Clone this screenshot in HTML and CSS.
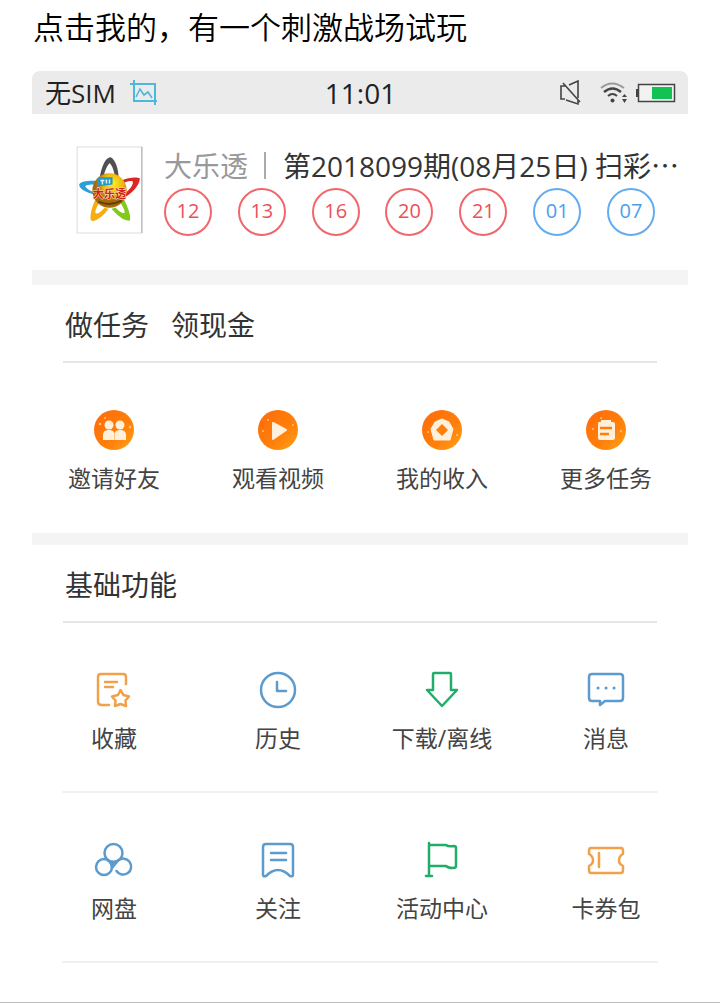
FILE: index.html
```html
<!DOCTYPE html>
<html lang="zh-CN">
<head>
    <meta charset="UTF-8">
    <meta name="viewport" content="width=device-width, initial-scale=1">
    <title>我的</title>
    <link rel="stylesheet" href="styles.css">
</head>
<body>
    <h1>点击我的，有一个刺激战场试玩</h1>

    <div class="phone">
        <!-- Status bar -->
        <div class="status">
            <div class="status-left">
                <span>无SIM</span>
                <svg width="28" height="26" viewBox="0 0 28 26" fill="none" stroke="#4db8dc" stroke-width="2">
                    <path d="M0 4H25V22M4 0V21H27M25 20V25"/>
                    <path d="M6 17L10 9L14 15L18 12L22 18" stroke-width="1.6"/>
                </svg>
            </div>
            <time class="clock">11:01</time>
            <div class="status-right">
                <svg width="24" height="26" viewBox="0 0 24 26" fill="none" stroke="#444" stroke-width="1.6">
                    <path d="M8 6H3V19H7M11 5L20 1V18M8 20L20 24V20M5 3L22 22"/>
                </svg>
                <svg width="28" height="24" viewBox="0 0 28 24" fill="none">
                    <path d="M1 7Q12 -2 24 7" stroke="#999" stroke-width="2"/>
                    <path d="M4 11Q12.500 4 21 11" stroke="#444" stroke-width="2.400"/>
                    <path d="M8 15Q12.500 11 17 15" stroke="#444" stroke-width="2"/>
                    <circle cx="12.500" cy="19.500" r="2" fill="#444"/>
                    <path d="M22 16L24.500 13L27 16ZM22 18L24.500 22L27 18Z" fill="#444"/>
                </svg>
                <svg width="40" height="20" viewBox="0 0 40 20">
                    <rect x="2.500" y="1.500" width="36" height="17" fill="#f2f2f2" stroke="#444" stroke-width="1.500"/>
                    <rect x="0" y="6" width="2" height="8" fill="#444"/>
                    <rect x="16" y="4" width="20" height="12" fill="#12c353"/>
                </svg>
            </div>
        </div>

        <!-- Lottery result -->
        <section class="lottery">
            <svg class="lottery-logo" viewBox="0 0 66 87">
                <rect x="1" y="1" width="64" height="85" fill="#fff" stroke="#ddd"/>
                <path d="M65 1V86" stroke="#aaa"/>
                <path d="M23 33C25 20 29 11 34 11C39 13 42 23 42 32L38 28C37 23 35 18 33 17C30 20 28 26 27 31Z" fill="#505052"/>
                <path d="M19 48C9 46 3 42 3 38C5 34 17 34 24 35L21 38C15 38 10 38 9 40C11 43 15 45 19 46Z" fill="#2c9ed8"/>
                <path d="M45 34C54 30 61 31 63 32C63 39 55 47 48 51L48 47C53 43 57 38 56 35C53 34 50 35 46 37Z" fill="#dc2525"/>
                <path d="M19 53C15 61 13 72 15 74C20 75 27 69 32 62L28 61C24 66 20 68 19 66C19 62 22 58 23 56Z" fill="#f6ad14"/>
                <path d="M47 52C51 60 55 71 53 74C47 74 40 68 35 62L39 61C44 66 47 67 48 66C48 62 45 58 43 55Z" fill="#83c91c"/>
                <defs>
                    <radialGradient id="ball" cx="60%" cy="30%">
                        <stop offset="0" stop-color="#fff21a"/>
                        <stop offset=".6" stop-color="#edb314"/>
                        <stop offset="1" stop-color="#a9680a"/>
                    </radialGradient>
                </defs>
                <circle cx="33" cy="44" r="17" fill="url(#ball)"/>
                <path d="M22 31H36V38L21 40Z" fill="#2397c8"/>
                <path d="M24 34H28M26 33V38M30 33V37M33 33V37" stroke="#d8f4fa" stroke-width="1.500"/>
                <path d="M22 55Q34 60 45 54" fill="none" stroke="#57420d" stroke-width="2"/>
                <text class="logo-text" x="33" y="51" text-anchor="middle">大乐透</text>
            </svg>
            <div class="lottery-info">
                <div class="lottery-title"><span class="name">大乐透</span><span class="bar"></span><span>第2018099期(08月25日) 扫彩⋯</span></div>
                <ul class="balls">
                    <li>12</li>
                    <li>13</li>
                    <li>16</li>
                    <li>20</li>
                    <li>21</li>
                    <li class="blue">01</li>
                    <li class="blue">07</li>
                </ul>
            </div>
        </section>

        <!-- Tasks -->
        <section class="block">
            <h2><span>做任务</span><span>领现金</span></h2>
            <nav class="row">
                <a href="#">
                    <svg class="icon" viewBox="0 0 40 40">
                        <defs>
                            <linearGradient id="orange" x1="0" y1="0" x2="1" y2="1">
                                <stop offset="0" stop-color="#ff6a0a"/>
                                <stop offset=".6" stop-color="#ff800a"/>
                                <stop offset="1" stop-color="#ffa319"/>
                            </linearGradient>
                        </defs>
                        <circle cx="20" cy="20" r="20" fill="url(#orange)"/>
                        <g fill="#fff0dc">
                            <circle cx="15" cy="15" r="4.500"/>
                            <circle cx="26" cy="15" r="4.500"/>
                            <path d="M9 30V25Q9 20 15 20Q20 20 20.500 24Q21 20 26 20Q32 20 32 25V30Z"/>
                        </g>
                        <path d="M20.500 24V30" stroke="#ffc488"/>
                        <g fill="#ffc27a"><circle cx="6" cy="14" r="1.200"/><circle cx="11" cy="8" r="1"/><circle cx="36" cy="17" r="1.200"/></g>
                    </svg>
                    <span>邀请好友</span>
                </a>
                <a href="#">
                    <svg class="icon" viewBox="0 0 40 40">
                        <circle cx="20" cy="20" r="20" fill="url(#orange)"/>
                        <path d="M15 13L28 20L15 29Z" fill="#fff0dc" stroke="#fff0dc" stroke-width="2" stroke-linejoin="round"/>
                        <g fill="#ffc27a"><circle cx="5" cy="21" r="1"/><circle cx="10" cy="10" r="1"/><circle cx="35" cy="15" r="1"/></g>
                    </svg>
                    <span>观看视频</span>
                </a>
                <a href="#">
                    <svg class="icon" viewBox="0 0 40 40">
                        <circle cx="20" cy="20" r="20" fill="url(#orange)"/>
                        <path d="M20 9L27 12L31 19L28 30H12L9 19L13 12Z" fill="#fff0dc" stroke="#fff0dc" stroke-linejoin="round"/>
                        <path d="M20 14L26 20L20 26L14 20Z" fill="#ff7d0a"/>
                        <g fill="#ffc27a"><circle cx="6" cy="22" r="1"/><circle cx="35" cy="25" r="1"/></g>
                    </svg>
                    <span>我的收入</span>
                </a>
                <a href="#">
                    <svg class="icon" viewBox="0 0 40 40">
                        <circle cx="20" cy="20" r="20" fill="url(#orange)"/>
                        <path d="M13 12H15V10H25V12H27Q29 12 29 14V28Q29 30 27 30H14Q12 30 12 28V14Q12 12 13 12Z" fill="#fff0dc"/>
                        <path d="M14 18H26M14 24H23" stroke="#ff7d0a" stroke-width="2.500"/>
                        <g fill="#ffc27a"><circle cx="7" cy="19" r="1"/><circle cx="15" cy="8" r="1"/><circle cx="35" cy="21" r="1"/></g>
                    </svg>
                    <span>更多任务</span>
                </a>
            </nav>
        </section>

        <!-- Basic functions -->
        <section class="block">
            <h2>基础功能</h2>
            <nav class="row">
                <a href="#">
                    <svg class="icon line orange" viewBox="0 0 40 40">
                        <path d="M15 35H8Q4 35 4 32V7Q4 4 7 4H29Q32 4 32 7V14M11 12H23M11 17H19"/>
                        <path d="M26.500 20L29.500 25L35 26.500L31.500 30.500L32 36L26.500 34L21 36L21.500 30.500L18 26.500L24 25Z"/>
                    </svg>
                    <span>收藏</span>
                </a>
                <a href="#">
                    <svg class="icon line blue" viewBox="0 0 40 40">
                        <circle cx="20" cy="20" r="17"/>
                        <path d="M19 12V21H28"/>
                    </svg>
                    <span>历史</span>
                </a>
                <a href="#">
                    <svg class="icon line green" viewBox="0 0 40 40">
                        <path d="M12 3H28Q29 3 29 5V20H35L20 36L5 20H11V5Q11 3 12 3Z"/>
                    </svg>
                    <span>下载/离线</span>
                </a>
                <a href="#">
                    <svg class="icon line blue" viewBox="0 0 40 40">
                        <path d="M6 4H34Q37 4 37 7V28Q37 31 34 31H19L14 35V31H6Q3 31 3 28V7Q3 4 6 4Z"/>
                        <path class="dots" d="M12 18H12.100M20 18H20.100M28 18H28.100"/>
                    </svg>
                    <span>消息</span>
                </a>
            </nav>
            <nav class="row">
                <a href="#">
                    <svg class="icon line blue" viewBox="0 0 40 40">
                        <circle cx="19.500" cy="13" r="9"/>
                        <circle cx="10" cy="27" r="8"/>
                        <path d="M22.500 31A8 8 0 1 0 24 20.500"/>
                        <path d="M14 20.500Q19.500 23.500 24 20.500L18 28Q18 23 14 20.500Z" fill="#5b9bcd"/>
                    </svg>
                    <span>网盘</span>
                </a>
                <a href="#">
                    <svg class="icon line blue" viewBox="0 0 40 40">
                        <path d="M8 4H32Q35 4 35 7V35Q35 37 32 36Q20 24 8 36Q5 37 5 35V7Q5 4 8 4ZM13 13H28M13 20H28"/>
                    </svg>
                    <span>关注</span>
                </a>
                <a href="#">
                    <svg class="icon line green" viewBox="0 0 40 40">
                        <path d="M7 3V36M4 36H10M7 5H24Q26 7 32 6Q34 6 34 8V26Q34 28 31 28Q26 28 24 26H7"/>
                    </svg>
                    <span>活动中心</span>
                </a>
                <a href="#">
                    <svg class="icon line orange" viewBox="0 0 40 40">
                        <path d="M5 8H35Q37 8 37 11V14Q33 16 33 20.500Q33 24 37 26V30Q37 33 35 33H5Q3 33 3 30V26Q7 24 7 20.500Q7 16 3 14V11Q3 8 5 8ZM13 13V27"/>
                    </svg>
                    <span>卡券包</span>
                </a>
            </nav>
        </section>
    </div>
</body>
</html>
```
FILE: styles.css
```css
* {
    box-sizing: border-box;
}

body {
    margin: 0;
    min-height: 100vh;
    background: #fff;
    border-bottom: 1px solid #bbb;
    color: #333;
    font-family: "Open Sans", "Noto Sans CJK SC", sans-serif;
}

h1 {
    margin: 0;
    padding: 6px 33px 25px;
    color: #000;
    font-size: 31px;
    font-weight: 350;
    line-height: 40px;
    font-family: "Noto Sans CJK SC", sans-serif;
}

.phone {
    margin: 0 32px;
}

/* Status bar */
.status {
    display: grid;
    grid-template-columns: 1fr auto 1fr;
    align-items: center;
    height: 43px;
    padding: 0 12px 0 13px;
    background: #ebebeb;
    border-radius: 8px 8px 0 0;
    color: #222;
    font-size: 26px;
    line-height: 40px;
}

.status-left,
.status-right {
    display: flex;
    align-items: center;
    gap: 14px;
}

.status-right {
    justify-content: flex-end;
    gap: 8px;
}

.status-right svg:first-child {
    margin-right: 10px;
}

.clock {
    font-size: 28px;
}

/* Lottery result */
.lottery {
    display: flex;
    gap: 21px;
    padding: 32px 0 34px 44px;
}

.lottery-logo {
    flex: none;
    width: 67px;
    height: 88px;
}

.logo-text {
    font-family: "Noto Sans CJK SC", sans-serif;
    font-size: 11px;
    font-weight: 700;
    fill: #d3201c;
    stroke: #fbe3a0;
    stroke-width: 1px;
    paint-order: stroke;
}

.lottery-info {
    flex: 1;
    min-width: 0;
}

.lottery-title {
    display: flex;
    align-items: center;
    height: 38px;
    font-size: 28px;
    white-space: nowrap;
}

.lottery-title .name {
    color: #999;
}

.lottery-title .bar {
    width: 2px;
    height: 27px;
    margin: 0 17px 0 16px;
    background: #aaa;
}

.balls {
    display: flex;
    justify-content: space-between;
    margin: 4px 33px 0 0;
    padding: 0;
    list-style: none;
}

.balls li {
    width: 48px;
    height: 48px;
    border: 2px solid #f0666b;
    border-radius: 50%;
    color: #ea5257;
    font-size: 20px;
    line-height: 42px;
    text-align: center;
}

.balls .blue {
    border-color: #62acf0;
    color: #4a9fec;
}

/* Sections */
.block {
    border-top: 15px solid #f4f4f4;
}

.block + .block {
    border-top-width: 12px;
}

h2 {
    display: flex;
    gap: 22px;
    margin: 0 31px;
    padding: 4px 0 0 2px;
    border-bottom: 2px solid #e6e6e6;
    font-size: 28px;
    font-weight: 400;
    line-height: 72px;
}

.row {
    display: grid;
    grid-template-columns: repeat(4, 1fr);
    padding: 47px 0 38px;
}

.row a {
    display: flex;
    flex-direction: column;
    align-items: center;
    gap: 11px;
    color: #444;
    font-size: 23px;
    line-height: 34px;
    text-decoration: none;
}

.block + .block .row {
    position: relative;
}

.block + .block .row::after {
    content: "";
    position: absolute;
    right: 30px;
    bottom: 0;
    left: 30px;
    border-bottom: 2px solid #f0f0f0;
}

.icon {
    width: 40px;
    height: 40px;
}

.line {
    fill: none;
    stroke-width: 2.5;
    stroke-linejoin: round;
    stroke-linecap: round;
}

.line.orange {
    stroke: #f3a04b;
}

.line.blue {
    stroke: #5b9bcd;
}

.line.green {
    stroke: #21ad69;
}

.line .dots {
    stroke-width: 3;
}
```
